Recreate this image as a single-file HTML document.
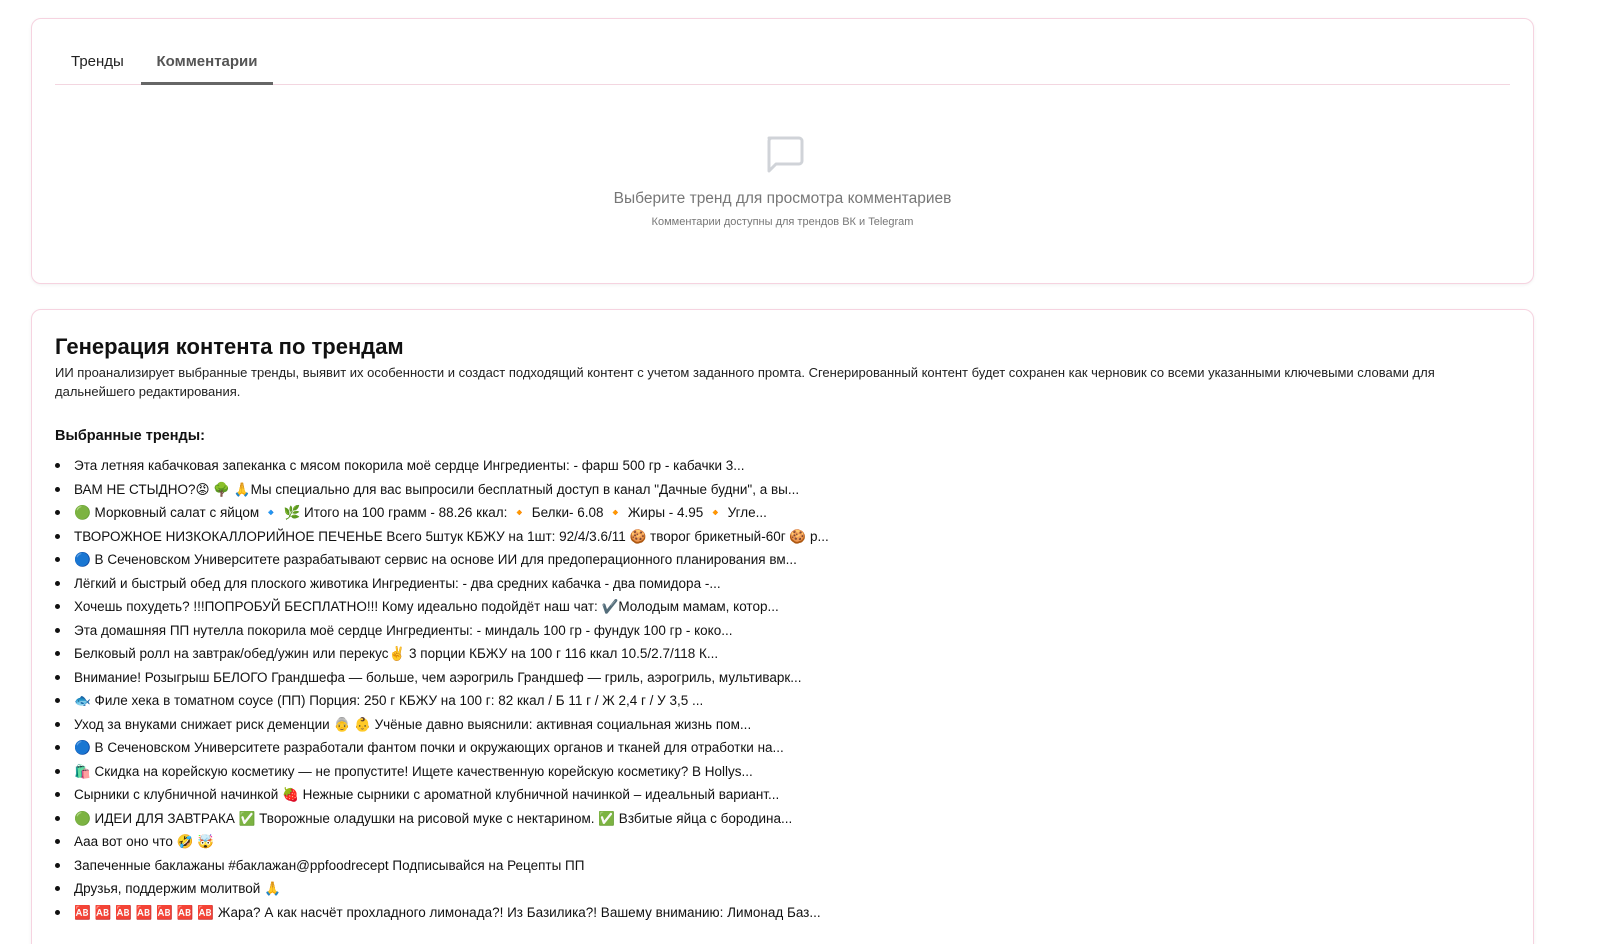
<!DOCTYPE html>
<html style="height:944px;overflow:hidden"><head><meta charset="utf-8"><style>
*{box-sizing:border-box;margin:0;padding:0}
body{width:1606px;height:944px;overflow:hidden;position:relative;background:#fff;font-family:"Liberation Sans","DejaVu Sans",sans-serif;color:#111}
.card{position:absolute;left:31px;width:1503px;border:1px solid #f6d3e0;border-radius:10px;background:#fff;box-shadow:0 1px 3px rgba(0,0,0,.06)}
.c1{top:18px;height:266px}
.c2{top:309px;height:660px}
.tabs{position:absolute;left:23px;right:23px;top:0;height:66px;border-bottom:1px solid #f3d6e0}
.tab{position:absolute;top:34px;font-size:15px}
.t1{left:16px;color:#222}
.t2{left:86px;width:132px;text-align:center;color:#555;font-weight:bold;height:32px;border-bottom:3px solid #666}
.empty{position:absolute;left:0;right:0;top:115px;text-align:center}
.e1{position:absolute;left:0;right:0;top:171px;text-align:center;font-size:15.5px;color:#777}
.e2{position:absolute;left:0;right:0;top:197px;text-align:center;font-size:11px;color:#777}
h2{position:absolute;left:23px;top:24px;font-size:22px;font-weight:bold;color:#111}
.desc{position:absolute;left:23px;top:53px;width:1460px;font-size:13px;line-height:19px;color:#222}
h4{position:absolute;left:23px;top:118px;font-size:14.5px;font-weight:bold}
ul{position:absolute;left:42px;top:144px;font-size:13.5px;line-height:23.5px;color:#111;list-style:none}
li{position:relative;white-space:nowrap}
li:before{content:"";position:absolute;left:-19px;top:9px;width:5px;height:5px;border-radius:50%;background:#111}
</style></head><body>
<div class="card c1">
 <div class="tabs"><div class="tab t1">Тренды</div><div class="tab t2">Комментарии</div></div>
 <div class="empty" style="top:115px"><svg width="42" height="42" viewBox="0 0 42 42" style="margin-left:2px"><path d="M6 4h30a3 3 0 0 1 3 3v20a3 3 0 0 1-3 3H13l-7 7V7a3 3 0 0 1 3-3z" fill="none" stroke="#d0d3d8" stroke-width="3" stroke-linejoin="round"/></svg></div>
 <div class="e1">Выберите тренд для просмотра комментариев</div>
 <div class="e2">Комментарии доступны для трендов ВК и Telegram</div>
</div>
<div class="card c2">
 <h2>Генерация контента по трендам</h2>
 <div class="desc">ИИ проанализирует выбранные тренды, выявит их особенности и создаст подходящий контент с учетом заданного промта. Сгенерированный контент будет сохранен как черновик со всеми указанными ключевыми словами для дальнейшего редактирования.</div>
 <h4>Выбранные тренды:</h4>
 <ul>
<li>Эта летняя кабачковая запеканка с мясом покорила моё сердце Ингредиенты: - фарш 500 гр - кабачки 3...</li>
<li>ВАМ НЕ СТЫДНО?😡 🌳 🙏Мы специально для вас выпросили бесплатный доступ в канал "Дачные будни", а вы...</li>
<li>🟢 Морковный салат с яйцом 🔹 🌿 Итого на 100 грамм - 88.26 ккал: 🔸 Белки- 6.08 🔸 Жиры - 4.95 🔸 Угле...</li>
<li>ТВОРОЖНОЕ НИЗКОКАЛЛОРИЙНОЕ ПЕЧЕНЬЕ Всего 5штук КБЖУ на 1шт: 92/4/3.6/11 🍪 творог брикетный-60г 🍪 р...</li>
<li>🔵 В Сеченовском Университете разрабатывают сервис на основе ИИ для предоперационного планирования вм...</li>
<li>Лёгкий и быстрый обед для плоского животика Ингредиенты: - два средних кабачка - два помидора -...</li>
<li>Хочешь похудеть? !!!ПОПРОБУЙ БЕСПЛАТНО!!! Кому идеально подойдёт наш чат: ✔️Молодым мамам, котор...</li>
<li>Эта домашняя ПП нутелла покорила моё сердце Ингредиенты: - миндаль 100 гр - фундук 100 гр - коко...</li>
<li>Белковый ролл на завтрак/обед/ужин или перекус✌️ 3 порции КБЖУ на 100 г 116 ккал 10.5/2.7/118 К...</li>
<li>Внимание! Розыгрыш БЕЛОГО Грандшефа — больше, чем аэрогриль Грандшеф — гриль, аэрогриль, мультиварк...</li>
<li>🐟 Филе хека в томатном соусе (ПП) Порция: 250 г КБЖУ на 100 г: 82 ккал / Б 11 г / Ж 2,4 г / У 3,5 ...</li>
<li>Уход за внуками снижает риск деменции 👵 👶 Учёные давно выяснили: активная социальная жизнь пом...</li>
<li>🔵 В Сеченовском Университете разработали фантом почки и окружающих органов и тканей для отработки на...</li>
<li>🛍️ Скидка на корейскую косметику — не пропустите! Ищете качественную корейскую косметику? В Hollys...</li>
<li>Сырники с клубничной начинкой 🍓 Нежные сырники с ароматной клубничной начинкой – идеальный вариант...</li>
<li>🟢 ИДЕИ ДЛЯ ЗАВТРАКА ✅ Творожные оладушки на рисовой муке с нектарином. ✅ Взбитые яйца с бородина...</li>
<li>Ааа вот оно что 🤣 🤯</li>
<li>Запеченные баклажаны #баклажан@ppfoodrecept Подписывайся на Рецепты ПП</li>
<li>Друзья, поддержим молитвой 🙏</li>
<li>🆎 🆎 🆎 🆎 🆎 🆎 🆎 Жара? А как насчёт прохладного лимонада?! Из Базилика?! Вашему вниманию: Лимонад Баз...</li>
 </ul>
</div>
</body></html>
